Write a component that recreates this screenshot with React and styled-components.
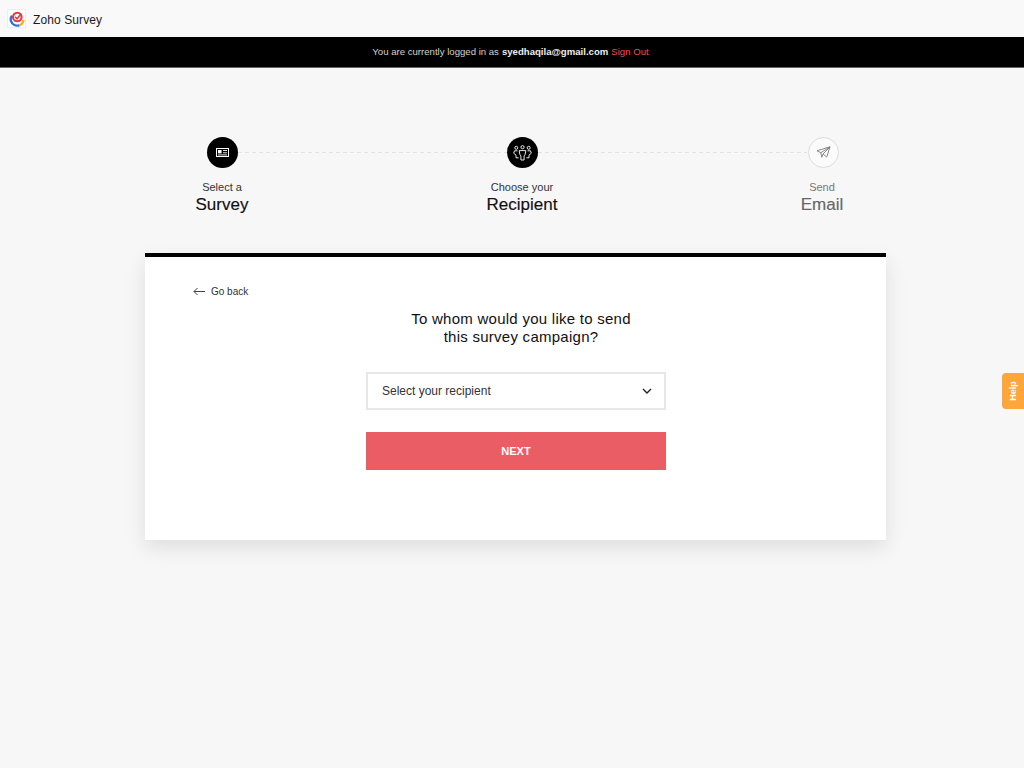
import React from "react";
import styled, { createGlobalStyle } from "styled-components";

const Global = createGlobalStyle`
  html, body { margin: 0; padding: 0; background: #f7f7f7; }
  body { font-family: "Liberation Sans", Arial, sans-serif; color: #111; }
  * { box-sizing: border-box; }
`;
const Page = styled.div`
  position: relative;
  width: 1024px;
  height: 768px;
  overflow: hidden;
  background: #f7f7f7;
`;
const TopBar = styled.header`
  height: 37px;
  display: flex;
  align-items: center;
  padding-left: 7px;
  gap: 7px;
  background: #f9f9f9;
`;
const LogoBox = styled.div`
  width: 19px;
  height: 19px;
  background: #fff;
  border: 1px solid #eee;
  display: flex;
  align-items: center;
  justify-content: center;
`;
const Brand = styled.span`
  font-size: 12px;
  line-height: 14px;
  margin-top: 2px;
  letter-spacing: 0.1px;
  color: #1a1a1a;
`;
const LoginBar = styled.div`
  height: 31px;
  background: #000;
  border-bottom: 1px solid #666;
  display: flex;
  align-items: center;
  justify-content: center;
  gap: 3px;
  padding: 0 3px 2px 0;
  font-size: 9.6px;
  color: #d0d0d0;
  white-space: nowrap;
`;
const Email = styled.b`
  color: #eee;
`;
const SignOut = styled.a`
  color: #ef4d50;
`;
const Stepper = styled.div`
  display: grid;
  grid-template-columns: repeat(3, 300px);
  margin: 69px 0 0 72px;
`;
const Step = styled.div`
  position: relative;
  display: flex;
  flex-direction: column;
  align-items: center;
  &::after {
    content: "";
    display: ${(p) => (p.$last ? "none" : "block")};
    position: absolute;
    top: 15px;
    left: calc(50% + 16px);
    width: 269px;
    height: 1px;
    background: repeating-linear-gradient(90deg, #e2e2e2 0 4px, transparent 4px 7px);
  }
`;
const Circle = styled.div`
  width: 31px;
  height: 31px;
  border-radius: 50%;
  display: flex;
  align-items: center;
  justify-content: center;
  background: ${(p) => (p.$off ? "#fbfbfb" : "#000")};
  border: ${(p) => (p.$off ? "1px solid #dcdcdc" : "none")};
  margin-left: ${(p) => (p.$off ? "2px" : "0")};
`;
const StepSmall = styled.div`
  margin-top: 12px;
  font-size: 11px;
  line-height: 14px;
  color: ${(p) => (p.$off ? "#777" : "#333")};
`;
const StepBig = styled.div`
  margin-top: 1px;
  font-size: 17px;
  line-height: 20px;
  -webkit-text-stroke: 0.15px currentColor;
  color: ${(p) => (p.$off ? "#666" : "#111")};
`;
const Card = styled.main`
  width: 741px;
  height: 287px;
  margin: 38px 0 0 145px;
  background: #fff;
  border-top: 4px solid #000;
  box-shadow: 0 8px 20px rgba(0, 0, 0, 0.1);
  padding: 27px 0 0 48px;
`;
const Back = styled.a`
  display: flex;
  align-items: center;
  gap: 6px;
  height: 14px;
  font-size: 10px;
  color: #333;
`;
const Form = styled.div`
  width: 300px;
  margin: 12px 0 0 173px;
  display: flex;
  flex-direction: column;
`;
const Question = styled.h2`
  margin: 0 0 0 -10px;
  width: 330px;
  text-align: center;
  font-weight: 400;
  font-size: 15px;
  line-height: 18px;
  color: #111;
  letter-spacing: 0.26px;
`;
const Select = styled.div`
  margin-top: 26px;
  height: 38px;
  background: #fff;
  border: 2px solid #e7e7e7;
  display: flex;
  align-items: center;
  justify-content: space-between;
  padding: 0 12px 0 14px;
  font-size: 12px;
  color: #333;
`;
const Next = styled.button`
  margin-top: 22px;
  height: 38px;
  background: #ea5d64;
  border: none;
  color: #fff;
  font: 700 11px "Liberation Sans", Arial, sans-serif;
`;
const Help = styled.div`
  position: absolute;
  left: 1002px;
  top: 373px;
  width: 22px;
  height: 36px;
  background: #fca63c;
  border-radius: 4px 0 0 4px;
  color: #fff;
  font-size: 9px;
  font-weight: 700;
  display: flex;
  align-items: center;
  justify-content: center;
  & > span { transform: rotate(-90deg); }
`;

const Logo = () => (
  <svg width="16" height="16" viewBox="0 0 16 16" fill="none">
    <path d="M2.9 4.6A6.3 6.3 0 0 0 5.4 14a6 6 0 0 0 5 .2" stroke="#2f6fe0" strokeWidth="2.3" />
    <path d="M10.2 14.3a6 6 0 0 0 4.2-5.6" stroke="#f6b21b" strokeWidth="2.3" />
    <circle cx="8.3" cy="6" r="4.3" stroke="#e8373e" strokeWidth="2.1" fill="#fff" />
    <path d="M6.1 5.8l2 2L11.8 3" stroke="#e8373e" strokeWidth="1.5" />
  </svg>
);
const CardIcon = () => (
  <svg width="13" height="9" viewBox="0 0 13 9" fill="none" stroke="#fff">
    <rect x="0.5" y="0.5" width="12" height="8" strokeWidth="1" />
    <rect x="2" y="2" width="3.6" height="3.4" fill="#fff" stroke="none" />
    <path d="M7 2.5h4M7 4.8h4M2 6.9h9" strokeWidth="0.9" />
  </svg>
);
const PeopleIcon = () => (
  <svg width="19" height="16" viewBox="0 0 19 16" fill="none" stroke="#fff" strokeWidth="0.9">
    <circle cx="9.5" cy="2.2" r="1.6" />
    <circle cx="3.3" cy="2.8" r="1.5" />
    <circle cx="15.7" cy="2.8" r="1.5" />
    <path d="M6.2 5.6h6.6l-.7 4.2-1 .9v4.3H7.9v-4.3l-1-.9z" />
    <path d="M4.5 5.8H1.5L.7 8.2l2.3 2v2.6h2.6" />
    <path d="M14.5 5.8h3l.8 2.4-2.3 2v2.6h-2.6" />
  </svg>
);
const PlaneIcon = () => (
  <svg width="15" height="13" viewBox="0 0 17 15" fill="none" stroke="#777" strokeWidth="1" strokeLinejoin="round">
    <path d="M16 1 1 5.5l4.4 2.3L16 1l-8 8.2 4.2 3.6z" />
    <path d="M5.4 7.8 6.5 13 8 9.2" />
  </svg>
);
const BackArrow = () => (
  <svg width="12" height="9" viewBox="0 0 12 9" fill="none" stroke="#444" strokeWidth="1">
    <path d="M12 4.5H1M4.5 1 1 4.5 4.5 8" />
  </svg>
);
const Chevron = () => (
  <svg width="10" height="6" viewBox="0 0 10 6" fill="none" stroke="#222" strokeWidth="1.4">
    <path d="M1 1l4 4 4-4" />
  </svg>
);

export default function App() {
  return (
    <Page>
      <Global />
      <TopBar>
        <LogoBox><Logo /></LogoBox>
        <Brand>Zoho Survey</Brand>
      </TopBar>
      <LoginBar>
        <span>You are currently logged in as</span>
        <Email>syedhaqila@gmail.com</Email>
        <SignOut>Sign Out</SignOut>
      </LoginBar>
      <Stepper>
        <Step>
          <Circle><CardIcon /></Circle>
          <StepSmall>Select a</StepSmall>
          <StepBig>Survey</StepBig>
        </Step>
        <Step>
          <Circle><PeopleIcon /></Circle>
          <StepSmall>Choose your</StepSmall>
          <StepBig>Recipient</StepBig>
        </Step>
        <Step $last>
          <Circle $off><PlaneIcon /></Circle>
          <StepSmall $off>Send</StepSmall>
          <StepBig $off>Email</StepBig>
        </Step>
      </Stepper>
      <Card>
        <Back><BackArrow /> Go back</Back>
        <Form>
          <Question>To whom would you like to send<br />this survey campaign?</Question>
          <Select>Select your recipient<Chevron /></Select>
          <Next>NEXT</Next>
        </Form>
      </Card>
      <Help><span>Help</span></Help>
    </Page>
  );
}
